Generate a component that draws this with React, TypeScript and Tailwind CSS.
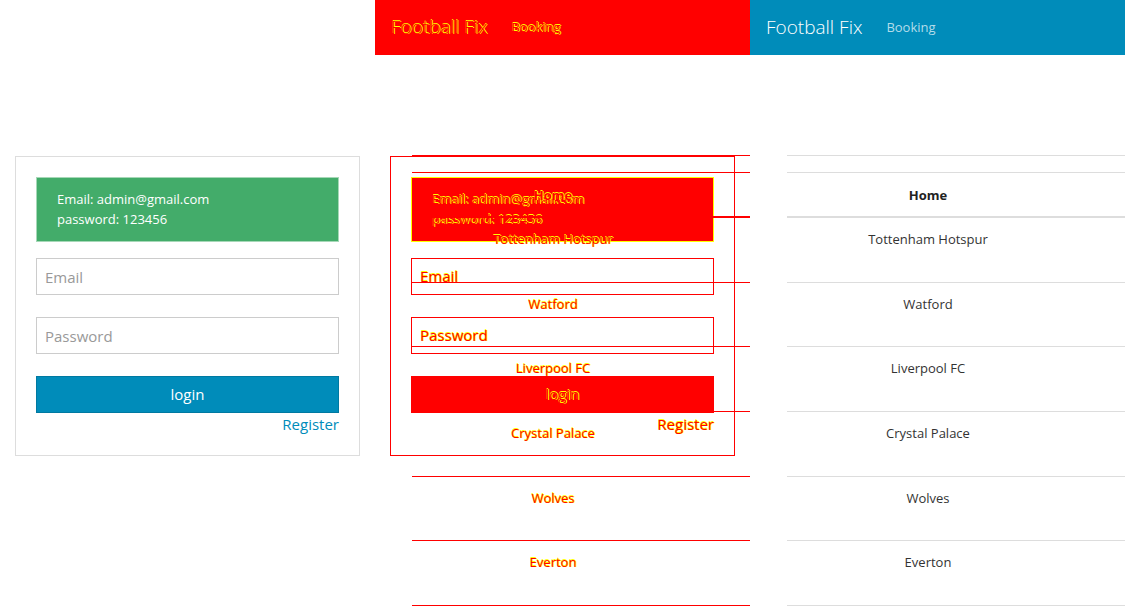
import React from "react";

type Variant = "normal" | "diff";

const DIFF =
  "text-[#ff0000] [text-shadow:1px_0_#ffff00,0_-1px_#ffff00]";

const teams = [
  "Tottenham Hotspur",
  "Watford",
  "Liverpool FC",
  "Crystal Palace",
  "Wolves",
  "Everton",
];
const rowH = ["h-[65px]", "h-[64px]", "h-[65px]", "h-[65px]", "h-[64px]", "h-[65px]"];

function Header({ v }: { v: Variant }) {
  const d = v === "diff";
  return (
    <div
      className={`h-[55px] flex items-center pl-[16px] ${d ? "bg-[#ff0000]" : "bg-[#008cba]"}`}
    >
      <span className={`text-[19px] font-light ${d ? DIFF : "text-white"}`}>Football Fix</span>
      <span className={`ml-[24px] text-[13px] ${d ? DIFF : "text-[#b3ddea]"}`}>Booking</span>
    </div>
  );
}

function Login({ v }: { v: Variant }) {
  const d = v === "diff";
  return (
    <div
      className={`mt-[101px] ml-[15px] w-[345px] h-[300px] border p-[20px] ${
        d ? "border-[#ff0000]" : "border-[#dddddd]"
      }`}
    >
      <div
        className={`h-[65px] mb-[16px] border pl-[20px] pt-[11px] text-[13px] leading-[20px] ${
          d ? "bg-[#ff0000] border-[#ffff00]" : "bg-[#43ac6a] border-[#a6d8b7] text-white"
        }`}
      >
        <div className={d ? DIFF : ""}>Email: admin@gmail.com</div>
        <div className={d ? DIFF : ""}>password: 123456</div>
      </div>
      {["Email", "Password"].map((p) =>
        d ? (
          <div
            key={p}
            className="h-[37px] mb-[22px] border border-[#ff0000] px-[8px] flex items-center text-[15px]"
          >
            <span className={DIFF}>{p}</span>
          </div>
        ) : (
          <input
            key={p}
            placeholder={p}
            type={p === "Password" ? "password" : "text"}
            className="block w-full h-[37px] mb-[22px] border border-[#cccccc] px-[8px] text-[15px] text-[#222] placeholder:text-[#999999] outline-none"
          />
        )
      )}
      <div
        className={`h-[37px] border flex items-center justify-center text-[15px] ${
          d ? "bg-[#ff0000] border-[#ff0000]" : "bg-[#008cba] border-[#0079a1] text-white"
        }`}
      >
        <span className={d ? DIFF : ""}>login</span>
      </div>
      <div className="text-right text-[15px] leading-[22px]">
        <span className={d ? DIFF : "text-[#008cba]"}>Register</span>
      </div>
    </div>
  );
}

function Table({ v }: { v: Variant }) {
  const d = v === "diff";
  const line = d ? "border-[#ff0000]" : "border-[#dddddd]";
  const text = d ? DIFF : "text-[#333333]";
  return (
    <div className="mt-[100px] ml-[37px] text-[13px] leading-[20px]">
      <div className={`h-[17px] border-t ${line}`} />
      <div className={`h-[46px] border-t border-b-2 ${line} flex items-center`}>
        <div className={`w-[282px] text-center font-bold ${d ? DIFF : "text-[#222222]"}`}>Home</div>
      </div>
      {teams.map((t, i) => (
        <div key={t} className={`${rowH[i]} border-b ${line} pt-[11px]`}>
          <div className={`w-[282px] text-center ${text}`}>{t}</div>
        </div>
      ))}
    </div>
  );
}

export default function App() {
  return (
    <div className="w-[1125px] h-[612px] overflow-hidden bg-white grid grid-cols-3 font-['Open_Sans',sans-serif]">
      <div className="h-[612px] overflow-hidden">
        <div className="h-[55px]" />
        <Login v="normal" />
      </div>
      <div className="relative h-[612px] overflow-hidden">
        <Header v="diff" />
        <Login v="diff" />
        <div className="absolute inset-0 pointer-events-none">
          <div className="h-[55px]" />
          <Table v="diff" />
        </div>
      </div>
      <div className="h-[612px] overflow-hidden">
        <Header v="normal" />
        <Table v="normal" />
      </div>
    </div>
  );
}
